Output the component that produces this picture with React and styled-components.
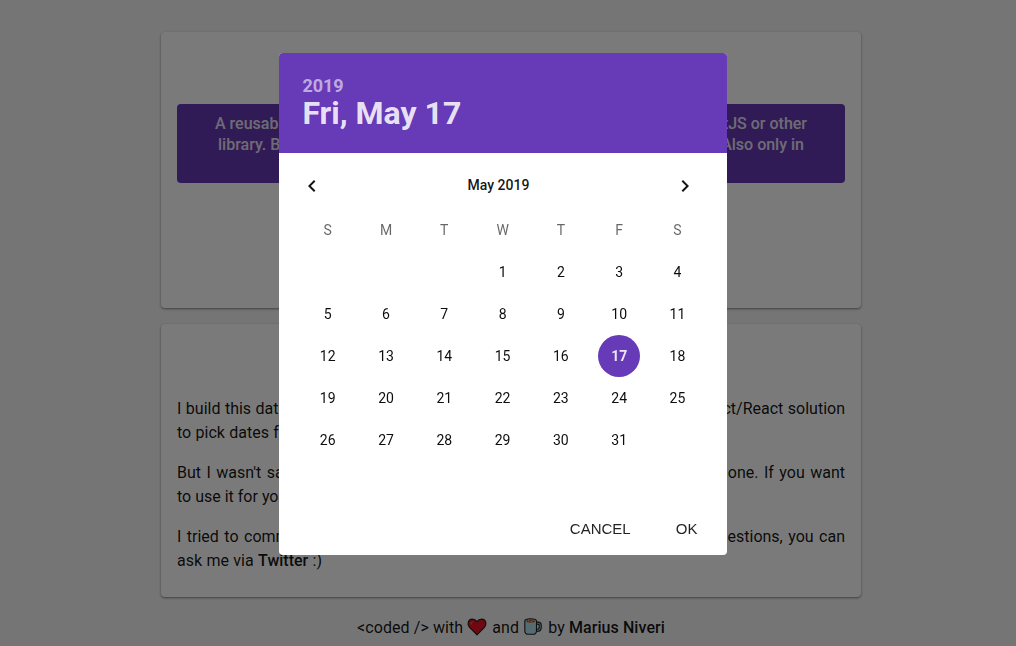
import React from 'react';
import styled, { createGlobalStyle } from 'styled-components';

const GlobalStyle = createGlobalStyle`
  * { box-sizing: border-box; }
  body {
    margin: 0;
    height: 646px;
    overflow: hidden;
    background: #f5f5f5;
    color: rgba(0, 0, 0, 0.92);
    font-family: Roboto, "Liberation Sans", sans-serif;
    font-size: 16px;
  }
`;

const Page = styled.main`
  width: 700px;
  margin-left: 161px;
  padding-top: 32px;
  display: flex;
  flex-direction: column;
  gap: 16px;
`;

const Card = styled.section`
  height: ${(p) => p.$height}px;
  padding: ${(p) => p.$top}px 16px 0;
  background: #fff;
  border-radius: 4px;
  box-shadow: 0 1px 3px rgba(0, 0, 0, 0.24), 0 1px 2px rgba(0, 0, 0, 0.26);
`;

const Banner = styled.div`
  height: 79px;
  padding: 9px 38px 0;
  border-radius: 4px;
  background: #673ab7;
  color: rgba(255, 255, 255, 0.87);
  font-weight: 500;
  line-height: 21px;
`;

const Line = styled.div`
  display: flex;
  justify-content: space-between;
  white-space: pre;
  padding: 0 ${(p) => p.$inset || 0}px;
  word-spacing: ${(p) => p.$words || 0}px;
`;

const Paragraph = styled.div`
  line-height: 24px;
  margin-bottom: 16px;
`;

const Footer = styled.footer`
  display: flex;
  justify-content: center;
  align-items: center;
  height: 24px;
  margin-top: 2px;
  white-space: pre;
  letter-spacing: 0.08px;
  svg { display: block; margin: 0 0 0 -1px; }
`;

const Strong = styled.span`
  font-weight: 500;
`;

const Overlay = styled.div`
  position: fixed;
  inset: 0;
  background: rgba(0, 0, 0, 0.52);
  padding: 53px 0 0 279px;
`;

const Dialog = styled.div`
  width: 448px;
  height: 502px;
  border-radius: 4px;
  overflow: hidden;
  background: #fff;
  display: flex;
  flex-direction: column;
`;

const Header = styled.header`
  height: 100px;
  padding: 22px 24px 0 23.4px;
  background: #673ab7;
  color: rgba(255, 255, 255, 0.87);
  font-weight: 700;
`;

const Year = styled.div`
  font-size: 18px;
  line-height: 21px;
  opacity: 0.67;
`;

const Selected = styled.div`
  font-size: 32px;
  line-height: 34px;
`;

const MonthBar = styled.div`
  display: flex;
  align-items: center;
  justify-content: space-between;
  height: 56px;
  padding: 9px 29.5px 0 20.5px;
  font-size: 14px;
  font-weight: 500;
`;

const Month = styled.span`
  padding-bottom: 2px;
`;

const Arrow = styled.button`
  display: flex;
  border: 0;
  padding: 0;
  background: none;
  color: rgba(0, 0, 0, 0.92);
`;

const Grid = styled.div`
  display: grid;
  grid-template-columns: repeat(7, 1fr);
  grid-auto-rows: 42px;
  padding: 0 20.4px 0 19.6px;
  justify-items: center;
`;

const Cell = styled.div`
  width: 42px;
  height: 42px;
  display: flex;
  align-items: center;
  justify-content: center;
  border-radius: 50%;
  font-size: 14px;
  color: ${(p) => (p.$active ? 'rgba(255,255,255,.87)' : p.$muted ? 'rgba(0,0,0,.6)' : 'rgba(0,0,0,.95)')};
  background: ${(p) => (p.$active ? '#673ab7' : 'transparent')};
  font-weight: ${(p) => (p.$active ? 700 : 400)};
`;

const Actions = styled.div`
  display: flex;
  justify-content: flex-end;
  gap: 45px;
  margin-top: auto;
  padding: 0 29.6px 16px 0;
`;

const Action = styled.button`
  border: 0;
  padding: 0;
  background: none;
  color: rgba(0, 0, 0, 0.87);
  font: 400 15px/20px "Liberation Sans", Arial, sans-serif;
`;

const Chevron = ({ d }) => (
  <svg width="24" height="24" viewBox="0 0 24 24" fill="currentColor"><path d={d} /></svg>
);

const Heart = () => (
  <svg width="22" height="22" viewBox="0 0 22 22">
    <path d="M11 18.8 3.6 11.4C.9 8.5 1.9 3.4 6.1 3.1c2 0 3.7.8 4.9 2.5 1.2-1.7 2.9-2.5 4.9-2.5 4.2.3 5.2 5.4 2.5 8.3Z" fill="#e81224" stroke="#222" strokeWidth="1.2" strokeLinejoin="round" />
    <path d="M5 8.4c0-1.7.8-2.6 2.2-2.6" fill="none" stroke="#f4776c" strokeWidth="1" />
  </svg>
);

const Coffee = () => (
  <svg width="22" height="22" viewBox="0 0 22 22">
    <path d="M14 7.2h2c1.4 0 2.2.8 2.2 2v2.6c0 1.6-1.2 2.6-3.4 2.6" fill="none" stroke="#222" strokeWidth="3.2" />
    <path d="M14 7.2h2c1.4 0 2.2.8 2.2 2v2.6c0 1.6-1.2 2.6-3.4 2.6" fill="none" stroke="#8fc4dc" strokeWidth="1.1" />
    <path d="M2.8 5c0-3 11.7-3 11.7 0v9.4c0 2.6-1.4 3.9-3.6 3.9H6.4c-2.2 0-3.6-1.3-3.6-3.9Z" fill="#b7dff1" stroke="#222" strokeWidth="1.1" />
    <ellipse cx="8.7" cy="5.1" rx="4.4" ry="1.7" fill="#a65b2b" />
    <path d="M6 4.8h1.2m1.3.8h1.4m.8-.9h1" stroke="#f3ddc8" strokeWidth="1" />
  </svg>
);

const days = [...Array(3).fill(null), ...Array.from({ length: 31 }, (_, i) => i + 1)];

export default function App() {
  return (
    <>
      <GlobalStyle />
      <Page>
        <Card $height={276} $top={72}>
          <Banner>
            <Line><span>A reusable</span><span>PreactJS or other</span></Line>
            <Line $inset={3}><span>library. But</span><span>Also only in</span></Line>
          </Banner>
        </Card>
        <Card $height={273} $top={73}>
          <Paragraph>
            <Line $words={0.5}><span>I build this date</span><span>Preact/React solution</span></Line>
            <Line $words={0.4}><span>to pick dates for</span></Line>
          </Paragraph>
          <Paragraph>
            <Line $words={1.5}><span>But I wasn't satisfied</span><span>one. If you want</span></Line>
            <Line><span>to use it for your</span></Line>
          </Paragraph>
          <Paragraph>
            <Line $words={1.5}><span>I tried to comment</span><span>questions, you can</span></Line>
            <Line $words={0.4}><span>ask me via <Strong>Twitter</Strong> :)</span></Line>
          </Paragraph>
        </Card>
        <Footer>
          {'<coded /> with '}<Heart />{' and '}<Coffee />{' by '}<Strong>Marius Niveri</Strong>
        </Footer>
      </Page>
      <Overlay>
        <Dialog>
          <Header>
            <Year>2019</Year>
            <Selected>Fri, May 17</Selected>
          </Header>
          <MonthBar>
            <Arrow aria-label="Previous month"><Chevron d="M15.41 7.41 14 6l-6 6 6 6 1.41-1.41L10.83 12z" /></Arrow>
            <Month>May 2019</Month>
            <Arrow aria-label="Next month"><Chevron d="M10 6 8.59 7.41 13.17 12l-4.58 4.59L10 18l6-6z" /></Arrow>
          </MonthBar>
          <Grid>
            {'SMTWTFS'.split('').map((d, i) => <Cell key={i} $muted>{d}</Cell>)}
            {days.map((d, i) => <Cell key={`d${i}`} $active={d === 17}>{d}</Cell>)}
          </Grid>
          <Actions>
            <Action>CANCEL</Action>
            <Action>OK</Action>
          </Actions>
        </Dialog>
      </Overlay>
    </>
  );
}
